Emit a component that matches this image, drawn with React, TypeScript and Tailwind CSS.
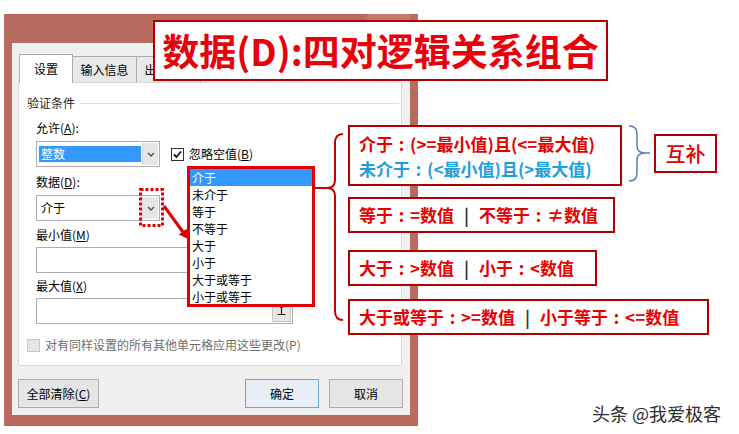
import React from "react";

function Chevron() {
  return (
    <svg width="8" height="5" viewBox="0 0 8 5">
      <path d="M1 1 L4 4 L7 1" fill="none" stroke="#4d4d4d" strokeWidth="1.3" />
    </svg>
  );
}

function Combo({ text, selected }: { text: string; selected?: boolean }) {
  return (
    <div className="w-[124px] h-[26px] border border-[#abadb3] bg-white flex p-[1px]">
      <div className="flex-1 flex items-center pl-[1px] pr-[1px]">
        {selected ? (
          <div className="w-full h-[16px] bg-[#3399ff] text-white flex items-center pl-[2px] leading-[16px]">{text}</div>
        ) : (
          <div className="w-full h-[16px] flex items-center pl-[2px] leading-[16px]">{text}</div>
        )}
      </div>
      <div className="w-[16px] bg-[#e6e6e6] border-l border-[#d4d4d4] flex items-center justify-center">
        <Chevron />
      </div>
    </div>
  );
}

function Label({ main, key1, tail }: { main: string; key1: string; tail: string }) {
  return (
    <div className="h-[16px] leading-[16px] text-[12px] text-black">
      {main}(<span className="underline">{key1}</span>){tail}
    </div>
  );
}

const sep = <span className="mx-[10px] text-[#333333]">|</span>;
const colon = <span className="inline-block w-[1em] text-center">:</span>;

export default function App() {
  return (
    <div className="relative w-[739px] h-[434px] overflow-hidden bg-white pl-[4px] pt-[14px] [font-family:'Noto_Sans_CJK_SC','Noto_Sans',sans-serif]">
      {/* Dialog */}
      <div className="w-[414px] h-[412px] bg-[#b86b5e] flex flex-col">
        <div className="h-[29px] flex justify-end pr-[8px] shrink-0">
          <div className="w-[43px] h-[20px] bg-[#c4796d]" />
        </div>
        <div className="flex-1 ml-[8px] mr-[8px] mb-[11px] bg-[#f0f0f0] flex flex-col pl-[6px] pr-[8px] pt-[11px] text-[12px]">
          {/* tabs */}
          <div className="h-[28px] flex items-end pl-[1px] shrink-0">
            <div className="relative w-[54px] h-[29px] mb-[-1px] bg-white border border-b-0 border-[#acacac] flex items-center justify-center leading-[16px]">
              设置
            </div>
            <div className="w-[64px] h-[26px] bg-[#e8e8e8] border border-l-0 border-b-0 border-[#acacac] flex items-center justify-center leading-[16px]">
              输入信息
            </div>
            <div className="w-[64px] h-[26px] bg-[#e8e8e8] border border-l-0 border-b-0 border-[#acacac] flex items-center justify-center leading-[16px]">
              出错警告
            </div>
          </div>
          {/* panel */}
          <div className="h-[284px] bg-white border border-[#d9d9d9] shrink-0 flex flex-col">
            <div className="mt-[12px] pl-[8px] h-[16px] flex items-center">
              <span className="leading-[16px] text-[#1e1e1e]">验证条件</span>
              <div className="flex-1 ml-[5px] mr-[2px] h-px bg-[#dcdcdc]" />
            </div>
            <div className="pl-[17px] flex flex-col">
              <div className="mt-[9px]">
                <Label main="允许" key1="A" tail=":" />
              </div>
              <div className="mt-[5px] flex items-center">
                <Combo text="整数" selected />
                <div className="ml-[11px] w-[13px] h-[13px] border border-[#333] bg-white flex items-center justify-center">
                  <svg width="11" height="11" viewBox="0 0 11 11">
                    <path d="M2 5.5 L4.5 8 L9 2.5" fill="none" stroke="#111" strokeWidth="1.8" />
                  </svg>
                </div>
                <div className="ml-[5px] leading-[16px]">
                  忽略空值(<span className="underline">B</span>)
                </div>
              </div>
              <div className="mt-[7px]">
                <Label main="数据" key1="D" tail=":" />
              </div>
              <div className="mt-[5px]">
                <Combo text="介于" />
              </div>
              <div className="mt-[6px] h-[16px] leading-[16px]">
                最小值(<span className="underline">M</span>)
              </div>
              <div className="mt-[4px] w-[257px] h-[26px] border border-[#abadb3] bg-white" />
              <div className="mt-[5px] h-[16px] leading-[16px]">
                最大值(<span className="underline">X</span>)
              </div>
              <div className="mt-[4px] w-[257px] h-[26px] border border-[#abadb3] bg-white flex justify-end p-[1px]">
                <div className="w-[19px] h-full bg-[#e6e6e6] border border-[#c8c8c8] flex items-center justify-center">
                  <svg width="11" height="11" viewBox="0 0 11 11">
                    <path d="M4 1.5 H7 M5.5 1.5 V8 M1.5 8.5 H9.5" fill="none" stroke="#222" strokeWidth="1.2" />
                  </svg>
                </div>
              </div>
            </div>
            <div className="mt-[13px] pl-[8px] flex items-center h-[16px]">
              <div className="w-[13px] h-[13px] border border-[#c6c6c6] bg-[#e6e6e6]" />
              <span className="ml-[5px] leading-[16px] text-[#6d6d6d]">对有同样设置的所有其他单元格应用这些更改(P)</span>
            </div>
          </div>
          {/* buttons */}
          <div className="mt-[13px] h-[29px] flex mr-[-1px]">
            <div className="w-[81px] h-[29px] border border-[#acacac] bg-[#e5e5e5] flex items-center justify-center leading-[16px]">
              全部清除(<span className="underline">C</span>)
            </div>
            <div className="ml-auto w-[74px] h-[29px] border border-[#6aa6e0] bg-[#e8eef5] flex items-center justify-center leading-[16px]">
              确定
            </div>
            <div className="ml-[10px] w-[74px] h-[29px] border border-[#acacac] bg-[#e5e5e5] flex items-center justify-center leading-[16px]">
              取消
            </div>
          </div>
        </div>
      </div>

      {/* dropdown list overlay */}
      <div className="absolute left-[187px] top-[166px] w-[128px] h-[141px] border-[3px] border-[#e00000] bg-white overflow-hidden text-[12px] text-black">
        {["介于", "未介于", "等于", "不等于", "大于", "小于", "大于或等于", "小于或等于"].map((t, i) =>
          i === 0 ? (
            <div key={t} className="h-[17px] leading-[17px] pl-[2px] bg-[#3399ff] text-white">{t}</div>
          ) : (
            <div key={t} className="h-[17px] leading-[17px] pl-[2px]">{t}</div>
          )
        )}
      </div>

      {/* title box */}
      <div className="absolute left-[153px] top-[20px] w-[455px] h-[61px] border-2 border-[#b00000] bg-white flex items-center justify-center text-[37px] font-bold text-[#e8000b] leading-none whitespace-nowrap">
        数据(D):四对逻辑关系组合
      </div>

      {/* drawings */}
      <svg className="absolute left-0 top-0 pointer-events-none" width="739" height="434" viewBox="0 0 739 434">
        <rect x="140.5" y="189.5" width="22" height="36" fill="none" stroke="#e00000" strokeWidth="3" strokeDasharray="3 2" />
        <line x1="164" y1="206" x2="183" y2="232" stroke="#e00000" strokeWidth="3" />
        <polygon points="188,239 178.7,234.6 186.7,228.8" fill="#e00000" />
        <line x1="315" y1="188" x2="328" y2="188" stroke="#d00000" strokeWidth="2" />
        <path d="M343 134 Q335 134 335 143 L335 180 Q335 188 327 188 Q335 188 335 196 L335 311 Q335 320 343 320" fill="none" stroke="#c80000" strokeWidth="2" />
        <path d="M629 126 Q637 126 637 134 L637 146 Q637 153 645 153 Q637 153 637 160 L637 173 Q637 181 629 181 M645 153 L650 153" fill="none" stroke="#5a7db6" strokeWidth="1.5" />
      </svg>

      {/* annotation boxes */}
      <div className="absolute left-[348px] top-[125px] w-[274px] h-[61px] border-2 border-[#b00000] bg-white pl-[9px] flex flex-col justify-center text-[17px] font-bold leading-[25px] whitespace-nowrap">
        <div className="text-[#e60000]">介于{colon}(&gt;=最小值)且(&lt;=最大值)</div>
        <div className="text-[#1e9fdc]">未介于{colon}(&lt;最小值)且(&gt;最大值)</div>
      </div>
      <div className="absolute left-[348px] top-[197px] w-[267px] h-[36px] border-2 border-[#b00000] bg-white pl-[9px] flex items-center text-[17px] font-bold text-[#e60000] whitespace-nowrap">
        <span>等于{colon}=数值</span>{sep}<span>不等于{colon}≠数值</span>
      </div>
      <div className="absolute left-[348px] top-[250px] w-[249px] h-[36px] border-2 border-[#b00000] bg-white pl-[9px] flex items-center text-[17px] font-bold text-[#e60000] whitespace-nowrap">
        <span>大于{colon}&gt;数值</span>{sep}<span>小于{colon}&lt;数值</span>
      </div>
      <div className="absolute left-[348px] top-[299px] w-[361px] h-[36px] border-2 border-[#b00000] bg-white pl-[9px] flex items-center text-[17px] font-bold text-[#e60000] whitespace-nowrap">
        <span>大于或等于{colon}&gt;=数值</span>{sep}<span>小于等于{colon}&lt;=数值</span>
      </div>
      <div className="absolute left-[654px] top-[134px] w-[63px] h-[39px] border-2 border-[#b00000] bg-white flex items-center justify-center text-[20px] font-medium text-[#e60000]">
        互补
      </div>

      {/* watermark */}
      <div className="absolute left-[592px] top-[401px] h-[24px] leading-[24px] text-[18px] text-[#2e2e2e] whitespace-nowrap [text-shadow:0_0_2px_#fff,0_0_2px_#fff]">
        头条 @我爱极客
      </div>
    </div>
  );
}
